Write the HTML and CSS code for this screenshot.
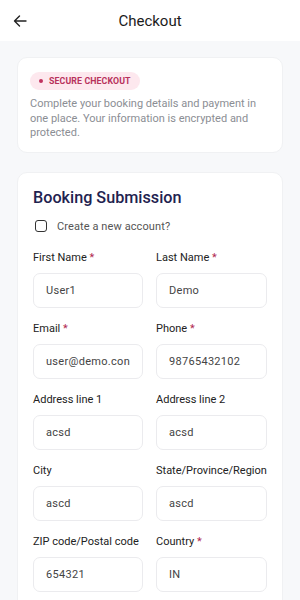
FILE: index.html
```html
<!DOCTYPE html>
<html>
<head>
<meta charset="utf-8">
<link rel="stylesheet" href="styles.css">
</head>
<body>
<header class="topbar">
  <svg class="back" width="14" height="12" viewBox="0 0 14 12"><path d="M13 6H1.5M6.5 1L1.5 6l5 5" fill="none" stroke="#222" stroke-width="1.4" stroke-linecap="round" stroke-linejoin="round"/></svg>
  <div class="title">Checkout</div>
</header>
<main class="content">
  <section class="card intro">
    <div class="badge"><span class="dot"></span>SECURE CHECKOUT</div>
    <p class="desc">Complete your booking details and payment in one place. Your information is encrypted and protected.</p>
  </section>
  <section class="card form">
    <h1 class="form-title">Booking Submission</h1>
    <label class="check"><span class="box"></span>Create a new account?</label>
    <div class="grid">
      <div class="field"><div class="lbl">First Name <span class="req">*</span></div><div class="input">User1</div></div>
      <div class="field"><div class="lbl">Last Name <span class="req">*</span></div><div class="input">Demo</div></div>
      <div class="field"><div class="lbl">Email <span class="req">*</span></div><div class="input">user@demo.con</div></div>
      <div class="field"><div class="lbl">Phone <span class="req">*</span></div><div class="input">98765432102</div></div>
      <div class="field"><div class="lbl">Address line 1</div><div class="input">acsd</div></div>
      <div class="field"><div class="lbl">Address line 2</div><div class="input">acsd</div></div>
      <div class="field"><div class="lbl">City</div><div class="input">ascd</div></div>
      <div class="field"><div class="lbl">State/Province/Region</div><div class="input">ascd</div></div>
      <div class="field"><div class="lbl">ZIP code/Postal code</div><div class="input">654321</div></div>
      <div class="field"><div class="lbl">Country <span class="req">*</span></div><div class="input">IN</div></div>
    </div>
  </section>
</main>
</body>
</html>
```
FILE: styles.css
```css
* { box-sizing: border-box; }
html, body { margin: 0; padding: 0; }
body {
  background: #f7f8fa;
  font-family: Roboto, "Noto Sans", sans-serif;
  width: 300px;
  height: 600px;
  overflow: hidden;
}
.topbar {
  height: 41px;
  background: #fff;
  display: flex;
  align-items: center;
  justify-content: center;
  position: relative;
}
.back { position: absolute; left: 13px; top: 15px; }
.title { font-size: 15px; font-weight: 400; color: #1b1b1b; margin-top: 1px; }
.content { padding: 16px 17px 0; display: flex; flex-direction: column; gap: 19px; }
.card {
  background: #fff;
  border: 1px solid #f0f1f3;
  border-radius: 10px;
}
.intro { padding: 10px 12px 12px; height: 96px; }
.badge {
  display: inline-flex;
  align-items: center;
  height: 18px;
  padding: 0 9px 0 9px;
  border-radius: 9px;
  background: #fde8ee;
  color: #b8325c;
  font-size: 8.8px;
  font-weight: 700;
  letter-spacing: 0.1px;
}
.dot { width: 4px; height: 4px; border-radius: 50%; background: #c0335f; margin-right: 6px; }
.desc {
  margin: 7px 0 0;
  font-size: 11px;
  line-height: 14.5px;
  color: #8b8e94;
}
.form { padding: 14px 15px 20px; }
.form-title {
  margin: 0;
  font-size: 16.2px;
  font-weight: 500;
  color: #1f2350;
  line-height: 22px;
}
.check {
  display: flex;
  align-items: center;
  margin-top: 10px;
  height: 14px;
  font-size: 11px;
  color: #555;
  letter-spacing: 0.1px;
}
.box {
  width: 12px; height: 12px;
  border: 1.5px solid #333;
  border-radius: 3px;
  margin: 0 10px 0 2px;
}
.grid {
  display: grid;
  grid-template-columns: 110px 111px;
  column-gap: 13px;
  row-gap: 14px;
  margin-top: 18px;
}
.lbl {
  font-size: 11px;
  line-height: 14px;
  color: #222;
  white-space: nowrap;
  margin-bottom: 8px;
}
.req { color: #b0284f; }
.input {
  height: 35px;
  border: 1px solid #ebebee;
  border-radius: 7px;
  padding-left: 12px;
  display: flex;
  align-items: center;
  font-size: 11px;
  color: #444;
  letter-spacing: 0.3px;
  overflow: hidden;
  white-space: nowrap;
}
```
